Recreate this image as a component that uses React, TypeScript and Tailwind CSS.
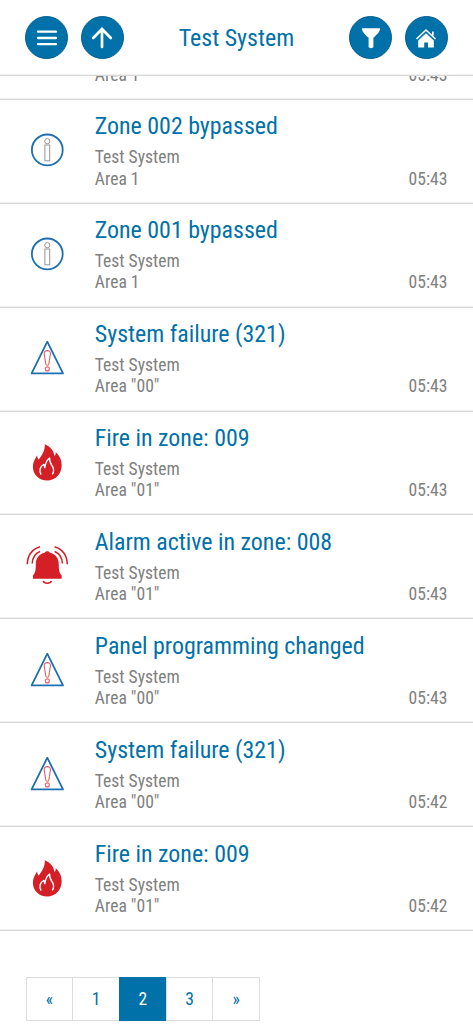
import type { ReactNode } from "react";

type Kind = "info" | "warning" | "fire" | "alarm";

type EventItem = {
  kind: Kind;
  title: string;
  area: string;
  time: string;
};

const events: EventItem[] = [
  { kind: "info", title: "Zone 002 bypassed", area: "Area 1", time: "05:43" },
  { kind: "info", title: "Zone 001 bypassed", area: "Area 1", time: "05:43" },
  { kind: "warning", title: "System failure (321)", area: 'Area "00"', time: "05:43" },
  { kind: "fire", title: "Fire in zone: 009", area: 'Area "01"', time: "05:43" },
  { kind: "alarm", title: "Alarm active in zone: 008", area: 'Area "01"', time: "05:43" },
  { kind: "warning", title: "Panel programming changed", area: 'Area "00"', time: "05:43" },
  { kind: "warning", title: "System failure (321)", area: 'Area "00"', time: "05:42" },
  { kind: "fire", title: "Fire in zone: 009", area: 'Area "01"', time: "05:42" },
];

const pages = ["«", "1", "2", "3", "»"];

function InfoIcon() {
  return (
    <svg width="44" height="44" viewBox="0 0 44 44" fill="none">
      <circle cx="22.3" cy="20.9" r="15.4" stroke="#1f70b3" strokeWidth="1.8" />
      <circle cx="22.3" cy="12.2" r="2.6" stroke="#959595" />
      <rect x="19.9" y="16" width="4.8" height="15.800" stroke="#959595" />
    </svg>
  );
}

function WarningIcon() {
  return (
    <svg width="44" height="44" viewBox="0 0 44 44" fill="none">
      <path d="M22.3 4.700 38 36.400H6.600Z" stroke="#1f70b3" strokeWidth="1.8" strokeLinejoin="round" />
      <path
        d="M22.3 13.600c2 0 3.300 1.100 3.100 3l-1.500 10.200c-.2 1.900-3 1.900-3.200 0l-1.500-10.200c-.2-1.900 1.100-3 3.100-3Z"
        stroke="#e4616b"
        strokeWidth="1.1"
      />
      <circle cx="22.3" cy="31.900" r="2" stroke="#e4616b" strokeWidth="1.1" />
    </svg>
  );
}

function FireIcon() {
  return (
    <svg width="44" height="44" viewBox="0 0 44 44" fill="none">
      <path
        d="M19.800 3.300c5.400 2.400 9.100 6 9.600 11.800 1.100-1.200 1.500-2.500 1.300-4.200 4.100 3.800 6.100 8.400 6 13.400-.2 9-6.300 15.200-14.500 15.200S7.900 33.600 7.900 25.800c0-4.800 2.100-7.800 4.200-11.600.1 1.900.6 3.200 1.700 4.400 3-4.400 6.500-8.800 6-15.300Z"
        fill="#d41f26"
      />
      <path
        d="M16.200 33.500c-2.400-3.700-1.300-8.300 2.800-10.100l.8 3.300c.7-4.500 2-7.900 4.800-9.700-.4 4.200 1.300 5.600 2.900 8.400 1.600 2.900 1.400 5.600-.2 8"
        stroke="#fff"
        strokeWidth="1.4"
        strokeLinejoin="round"
      />
    </svg>
  );
}

function AlarmIcon() {
  return (
    <svg width="44" height="44" viewBox="0 0 44 44" fill="none">
      <path
        d="M22.300 6.200c1.300 0 2.300.6 2.600 1.600 5.700 1.300 8.900 5.400 8.900 11.400 0 5.800.5 8.500 2.900 11.400v3.200H7.900v-3.200c2.400-2.900 2.900-5.600 2.900-11.400 0-6 3.200-10.100 8.900-11.400.3-1 1.300-1.600 2.600-1.600Z"
        fill="#d41f26"
      />
      <path
        d="M18.200 35.900c1 3 7.200 3 8.200 0M15 1.800C7.600 4.200 2.500 10.100 2.300 19.300M15 6.500C10.400 8.300 7.400 12 7.200 18.500M29.600 1.800c7.400 2.400 12.500 8.300 12.700 17.500M29.600 6.500c4.600 1.800 7.600 5.500 7.800 12"
        stroke="#d41f26"
        strokeWidth="1.5"
      />
    </svg>
  );
}

const icons: Record<Kind, ReactNode> = {
  info: <InfoIcon />,
  warning: <WarningIcon />,
  fire: <FireIcon />,
  alarm: <AlarmIcon />,
};

function RoundButton({ label, children }: { label: string; children: ReactNode }) {
  return (
    <button
      aria-label={label}
      className="flex size-[43px] items-center justify-center rounded-full border border-[#04608f] bg-[#0071a9]"
    >
      {children}
    </button>
  );
}

function Header() {
  return (
    <header className="flex h-[76px] shrink-0 items-center justify-between border-b border-[#d8d8d8] px-[25.4px] shadow-[inset_0_-1px_0_#f1f1f1]">
      <div className="flex gap-[12.6px]">
        <RoundButton label="Menu">
          <svg width="22" height="22" viewBox="0 0 22 22" stroke="#fff" strokeWidth="2.3" strokeLinecap="round">
            <path d="M2 4.700h18M2 11h18M2 17.200h18" />
          </svg>
        </RoundButton>
        <RoundButton label="Up">
          <svg width="22" height="22" viewBox="0 0 22 22" fill="none" stroke="#fff" strokeWidth="2.7" strokeLinecap="round">
            <path d="M11 20V2.400M2.200 11 11 2l8.800 9" />
          </svg>
        </RoundButton>
      </div>
      <h1 className="text-[23.9px] leading-[28px] text-[#0071a9]">Test System</h1>
      <div className="flex gap-[12.6px]">
        <RoundButton label="Filter">
          <svg width="22" height="22" viewBox="0 0 22 22" fill="#fff">
            <path d="M2 1.200h18c0 3.600-2.200 5.400-6.600 9.600v9c0 1.900-4.800 1.900-4.800 0v-9C4.200 6.600 2 4.800 2 1.200Z" />
          </svg>
        </RoundButton>
        <RoundButton label="Home">
          <svg width="22" height="22" viewBox="0 0 22 22" fill="#fff">
            <path d="M11 6.200 18.800 13.400v7H13v-5H9.200v5H3.200v-7Z" />
            <path d="M1.500 12 11 3 20.500 12M17.900 4.500v4" fill="none" stroke="#fff" strokeWidth="1.6" />
          </svg>
        </RoundButton>
      </div>
    </header>
  );
}

function EventRow({ event }: { event: EventItem }) {
  return (
    <li className="flex h-[103.95px] border-b border-[#d8d8d8] shadow-[inset_0_-1px_0_#f1f1f1]">
      <div className="flex w-[94.8px] items-center pl-[25px]">{icons[event.kind]}</div>
      <div className="flex flex-1 items-end justify-between pr-[25.6px] pb-[12.7px] text-[17.6px] leading-[21.4px] text-[#808080]">
        <div>
          <h2 className="mb-[6px] text-[23.9px] leading-[30px] text-[#0071a9]">{event.title}</h2>
          <p>Test System</p>
          <p>{event.area}</p>
        </div>
        <time>{event.time}</time>
      </div>
    </li>
  );
}

function Pagination({ current }: { current: string }) {
  return (
    <nav className="mt-[46px] ml-[25.6px] flex text-[17.6px] text-[#0071a9]">
      {pages.map((page) => (
        <button
          key={page}
          className={
            page === current
              ? "-ml-px h-[44px] w-[47.7px] border border-[#0071a9] bg-[#0071a9] text-white"
              : "-ml-px h-[44px] w-[47.7px] border border-[#dddddd] first:ml-0"
          }
        >
          {page}
        </button>
      ))}
    </nav>
  );
}

export default function App() {
  return (
    <div className="flex h-screen flex-col overflow-hidden bg-white font-['Roboto_Condensed',Roboto,sans-serif] [font-stretch:75%]">
      <Header />
      <main className="min-h-0 flex-1 overflow-hidden">
        <ul>
          {/* tail of the row that is scrolled under the header */}
          <li className="flex h-[23.7px] items-end justify-between overflow-hidden border-b border-[#d8d8d8] pr-[25.6px] pb-[12.7px] pl-[94.8px] text-[17.6px] leading-[21.4px] text-[#808080] shadow-[inset_0_-1px_0_#f1f1f1]">
            <p>Area 1</p>
            <time>05:43</time>
          </li>
          {events.map((event, i) => (
            <EventRow key={i} event={event} />
          ))}
        </ul>
        <Pagination current="2" />
      </main>
    </div>
  );
}
